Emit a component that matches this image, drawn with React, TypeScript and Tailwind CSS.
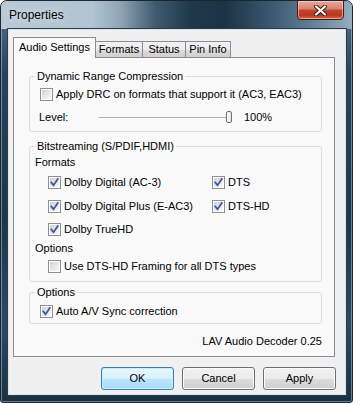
import React from 'react';

const font = "font-['Tahoma','Liberation_Sans',sans-serif]";

function CheckBox({ checked }: { checked?: boolean }) {
  return (
    <span className="flex w-[13px] h-[13px] shrink-0 border border-[#8e8f8f] bg-white p-[1px]">
      <span className="flex flex-1 items-center justify-center bg-[linear-gradient(135deg,#cdd1d6_0%,#e4e6e9_45%,#f7f7f8_100%)]">
        {checked && (
          <svg width="9" height="9" viewBox="0 0 9 9" className="overflow-visible">
            <path d="M1.3 4.4 L3.5 7.2 L7.8 1" fill="none" stroke="#3f57a0" strokeWidth="1.8" strokeLinecap="square" />
          </svg>
        )}
      </span>
    </span>
  );
}

function Row({ checked, label, className = '' }: { checked?: boolean; label: string; className?: string }) {
  return (
    <div className={`flex h-[13px] items-center gap-[3px] ${className}`}>
      <CheckBox checked={checked} />
      <span className="leading-[13px] whitespace-nowrap">{label}</span>
    </div>
  );
}

function Button({ label, primary }: { label: string; primary?: boolean }) {
  return (
    <div
      className={`flex w-[73px] h-[23px] items-center justify-center rounded-[3px] border ${
        primary
          ? 'border-[#3c7fb1] bg-[linear-gradient(#eaf6fd_0%,#d9f0fc_50%,#bee6fd_51%,#a7d9f5_100%)] shadow-[inset_0_0_0_1px_#c4f0fe]'
          : 'border-[#707070] bg-[linear-gradient(#f2f2f2_0%,#ebebeb_50%,#dddddd_51%,#cfcfcf_100%)] shadow-[inset_0_0_0_1px_#fbfbfb]'
      }`}
    >
      {label}
    </div>
  );
}

export default function App() {
  return (
    <div className={`w-[362px] h-[404px] bg-white text-[11px] text-black ${font}`}>
      {/* Window */}
      <div className="flex flex-col w-[353px] h-[403px] rounded-t-[7px] rounded-b-[3px] border border-[#1a2733] bg-[linear-gradient(180deg,#5a7489_0%,#27445a_18%,#1d364a_55%,#2a4a62_80%,#1a3143_100%)] shadow-[inset_0_0_0_1px_rgba(200,220,235,0.45)] overflow-hidden">
        {/* Title bar */}
        <div className="flex h-[28px] shrink-0 items-start justify-between bg-[linear-gradient(90deg,#b9c9d6_0%,#b2c4d1_26%,#8ea5b6_34%,#3f5b70_44%,#1f384b_54%,#1c3345_64%,#37566d_76%,#5f7d93_88%,#95adbf_100%)]">
          <span className="mt-[7px] ml-[8px] text-[12px] leading-[14px] font-['Liberation_Sans',sans-serif] [text-shadow:0_0_6px_#e8eef3]">
            Properties
          </span>
          <div className="-mt-px mr-[8px] flex w-[47px] h-[20px] items-center justify-center rounded-b-[4px] border border-[#4a1c16] bg-[linear-gradient(#e9a899_0%,#d98270_45%,#c5432b_50%,#b93a24_80%,#d66b4a_100%)] shadow-[inset_0_0_0_1px_rgba(255,220,210,0.55)]">
            <svg width="13" height="11" viewBox="0 0 13 11">
              <path d="M2 1.5 L11 9.5 M11 1.5 L2 9.5" stroke="#3b1510" strokeWidth="4" strokeLinecap="round" />
              <path d="M2 1.5 L11 9.5 M11 1.5 L2 9.5" stroke="#ffffff" strokeWidth="2.2" strokeLinecap="round" />
            </svg>
          </div>
        </div>

        {/* Client area */}
        <div className="flex flex-1 pl-[7px] pr-[6px] pb-[7px]">
          <div className="flex flex-1 flex-col border border-[#dbe4eb] bg-[#f0f0f0] pl-[4px] pt-[7px] shadow-[0_0_0_1px_#2a3d4c]">
            {/* Tabs */}
            <div className="flex h-[20px] items-end">
              <div className="relative z-10 -mb-px flex w-[83px] h-[21px] items-center justify-center border border-b-0 border-[#898c95] bg-[#f9f9f9] pb-[1px]">
                Audio Settings
              </div>
              <div className="-ml-px flex w-[48px] h-[16px] items-center justify-center border border-b-0 border-[#898c95] bg-[linear-gradient(#f2f2f2_0%,#ebebeb_50%,#dddddd_51%,#cfcfcf_100%)]">
                Formats
              </div>
              <div className="-ml-px flex w-[44px] h-[16px] items-center justify-center border border-b-0 border-[#898c95] bg-[linear-gradient(#f2f2f2_0%,#ebebeb_50%,#dddddd_51%,#cfcfcf_100%)]">
                Status
              </div>
              <div className="-ml-px flex w-[46px] h-[16px] items-center justify-center border border-b-0 border-[#898c95] bg-[linear-gradient(#f2f2f2_0%,#ebebeb_50%,#dddddd_51%,#cfcfcf_100%)]">
                Pin Info
              </div>
            </div>

            {/* Tab panel */}
            <div className="flex w-[322px] h-[300px] flex-col border border-[#898c95] bg-[#f9f9f9] pl-[15px]">
              {/* Dynamic Range Compression */}
              <fieldset className="mt-[12px] w-[293px] rounded-[3px] border border-[#d5dfe5] pb-[7px]">
                <legend className="ml-[5px] px-[2px] leading-[13px]">Dynamic Range Compression</legend>
                <Row label="Apply DRC on formats that support it (AC3, EAC3)" className="mt-[5px] ml-[10px]" />
                <div className="mt-[10px] ml-[9px] flex h-[13px] items-center">
                  <span className="w-[59px] leading-[13px]">Level:</span>
                  <div className="relative flex w-[134px] h-[13px] items-center">
                    <div className="h-[2px] w-full rounded-[1px] border-t border-[#b0b0b0] border-b border-b-[#ffffff] bg-[#e7eaea]" />
                    <div className="absolute right-0 top-[0px] w-[6px] h-[12px] rounded-[2px] border border-[#707070] bg-[linear-gradient(90deg,#ffffff,#e3e3e3)]" />
                  </div>
                  <span className="ml-[12px] leading-[13px]">100%</span>
                </div>
              </fieldset>

              {/* Bitstreaming */}
              <fieldset className="mt-[8px] w-[293px] rounded-[3px] border border-[#d5dfe5] pb-[8px]">
                <legend className="ml-[5px] px-[2px] leading-[13px]">Bitstreaming (S/PDIF,HDMI)</legend>
                <div className="mt-[3px] ml-[5px] h-[13px] leading-[13px]">Formats</div>
                <div className="mt-[7px] ml-[18px] flex">
                  <Row checked label="Dolby Digital (AC-3)" className="w-[164px]" />
                  <Row checked label="DTS" />
                </div>
                <div className="mt-[11px] ml-[18px] flex">
                  <Row checked label="Dolby Digital Plus (E-AC3)" className="w-[164px]" />
                  <Row checked label="DTS-HD" />
                </div>
                <Row checked label="Dolby TrueHD" className="mt-[10px] ml-[18px]" />
                <div className="mt-[6px] ml-[5px] h-[13px] leading-[13px]">Options</div>
                <Row label="Use DTS-HD Framing for all DTS types" className="mt-[5px] ml-[18px]" />
              </fieldset>

              {/* Options */}
              <fieldset className="mt-[4px] w-[293px] rounded-[3px] border border-[#d5dfe5] pb-[5px]">
                <legend className="ml-[5px] px-[2px] leading-[13px]">Options</legend>
                <Row checked label="Auto A/V Sync correction" className="mt-[6px] ml-[10px]" />
              </fieldset>

              <div className="mt-[11px] w-[293px] h-[13px] text-right leading-[13px]">LAV Audio Decoder 0.25</div>
            </div>

            {/* Buttons */}
            <div className="mt-[10px] flex w-[323px] justify-end gap-[8px]">
              <Button label="OK" primary />
              <Button label="Cancel" />
              <Button label="Apply" />
            </div>
          </div>
        </div>
      </div>
    </div>
  );
}
